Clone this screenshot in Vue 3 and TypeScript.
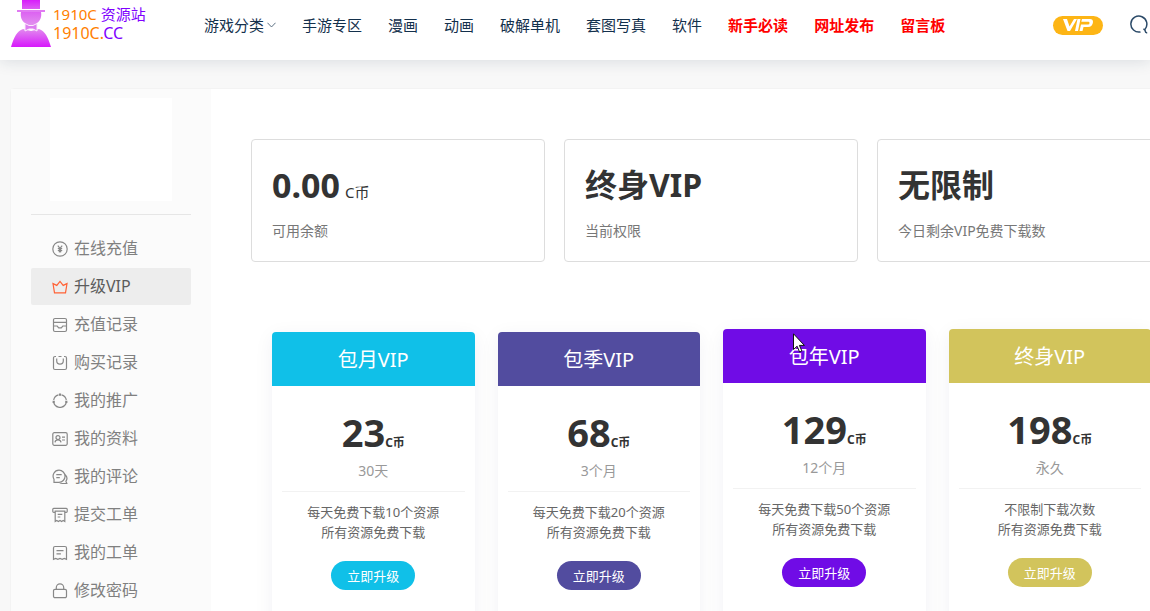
<script setup lang="ts">
interface NavItem { label: string; hot?: boolean; menu?: boolean }
interface SideItem { label: string; icon: string; active?: boolean }
interface Stat { value: string; unit?: string; label: string }
interface Plan { name: string; price: string; term: string; features: string[]; theme: string; raised?: boolean }

const nav: NavItem[] = [
  { label: '游戏分类', menu: true },
  { label: '手游专区' },
  { label: '漫画' },
  { label: '动画' },
  { label: '破解单机' },
  { label: '套图写真' },
  { label: '软件' },
  { label: '新手必读', hot: true },
  { label: '网址发布', hot: true },
  { label: '留言板', hot: true },
]

const side: SideItem[] = [
  { label: '在线充值', icon: 'M8 .8a7.2 7.2 0 1 0 0 14.4A7.2 7.2 0 0 0 8 .8M5.8 4.6 8 7.4l2.2-2.8M8 7.4v4M5.8 7.5h4.4M5.8 9.5h4.4M7.3 6.5v4.8M8.7 6.5v4.8' },
  { label: '升级VIP', icon: 'M1 4.6 4.8 6.400 8 2.400l3.200 4L15 4.600l-1.500 9.200h-11z', active: true },
  { label: '充值记录', icon: 'M3 1.5h10a1.5 1.5 0 0 1 1.5 1.5v10a1.5 1.5 0 0 1-1.5 1.5H3A1.5 1.5 0 0 1 1.5 13V3A1.5 1.5 0 0 1 3 1.5M1.5 5.4h13M1.5 9h3.7l1.5 1.8h2.6L10.8 9h3.7' },
  { label: '购买记录', icon: 'M4 1.5H3A1.5 1.5 0 0 0 1.500 3V13A1.5 1.5 0 0 0 3 14.5h10a1.5 1.5 0 0 0 1.5-1.5V3A1.500 1.500 0 0 0 13 1.500H12M6.500 1.500h3M4.700 3.400v2.400a3.300 3.300 0 0 0 6.600 0V3.400' },
  { label: '我的推广', icon: 'M9.6 1.8a6.4 6.4 0 0 1 4.7 5.2M14.2 9.8a6.4 6.4 0 0 1-4.5 4.4M9.700 14.200a6.400 6.400 0 0 1-3.400 0M6.3 14.2a6.4 6.4 0 0 1-4.5-4.4M1.7 7a6.4 6.4 0 0 1 4.7-5.2M7.500 1.200h1v1h-1zM13.800 8.300h1v1h-1zM1.200 8.300h1v1h-1z' },
  { label: '我的资料', icon: 'M2.3 1.7h11.4a1.5 1.5 0 0 1 1.5 1.5v9.6a1.5 1.5 0 0 1-1.5 1.5H2.3a1.5 1.5 0 0 1-1.5-1.5V3.2a1.5 1.5 0 0 1 1.5-1.5M6 4.6a2 2 0 1 0 0 4 2 2 0 0 0 0-4M3 11.4c.1-1.6 1-2.6 3-2.6s2.800 1 3 2.600M10 6.200h3M10 9h3' },
  { label: '我的评论', icon: 'M7 1.200a5.900 5.900 0 0 0-5 9v3.100h5a6 6 0 0 0 0-12.100M4.300 5.600h5.400M4.300 8.600h3.500M13.200 5.800a5 5 0 0 1 .7 6.500l.9 2.200h-4.300a5 5 0 0 1-3-.9' },
  { label: '提交工单', icon: 'M3 5.400H1.700A.9.9 0 0 1 .8 4.500V2.300a.9.9 0 0 1 .9-.9h12.600a.9.9 0 0 1 .9.9v2.200a.9.9 0 0 1-.9.9H13M3.200 4.200h9.600v10.300l-1.600-1-1.600 1-1.600-1-1.600 1-1.600-1-1.600 1zM5.700 7.300h4.600M5.700 10h2.600' },
  { label: '我的工单', icon: 'M3 1.500h10A1.500 1.500 0 0 1 14.500 3v11.400l-2.200-.9-2.100.9-2.200-.9-2.200.9-2.100-.9-2.200.9V3A1.500 1.500 0 0 1 3 1.500M4.500 5.600h7M4.500 8.800h4.400' },
  { label: '修改密码', icon: 'M3 6.300h10a1.500 1.500 0 0 1 1.500 1.500v5.400a1.500 1.500 0 0 1-1.500 1.500H3a1.500 1.500 0 0 1-1.500-1.500V7.800A1.500 1.500 0 0 1 3 6.300M4.300 6V4.500a3.700 3.700 0 0 1 7.400 0V6' },
]

const stats: Stat[] = [
  { value: '0.00', unit: 'C币', label: '可用余额' },
  { value: '终身VIP', label: '当前权限' },
  { value: '无限制', label: '今日剩余VIP免费下载数' },
]

const plans: Plan[] = [
  { name: '包月VIP', price: '23', term: '30天', features: ['每天免费下载10个资源', '所有资源免费下载'], theme: 'cyan' },
  { name: '包季VIP', price: '68', term: '3个月', features: ['每天免费下载20个资源', '所有资源免费下载'], theme: 'indigo' },
  { name: '包年VIP', price: '129', term: '12个月', features: ['每天免费下载50个资源', '所有资源免费下载'], theme: 'violet', raised: true },
  { name: '终身VIP', price: '198', term: '永久', features: ['不限制下载次数', '所有资源免费下载'], theme: 'gold', raised: true },
]
</script>

<template>
  <div class="page">
    <header class="topbar">
      <a class="brand" href="#">
        <svg class="mascot" viewBox="0 0 40 47" aria-hidden="true">
          <defs>
            <linearGradient id="hat" x1="0" y1="0" x2="0" y2="1">
              <stop offset="0" stop-color="#d81cfb" />
              <stop offset="1" stop-color="#dc5cf3" />
            </linearGradient>
            <linearGradient id="face" x1="0" y1="0" x2="0" y2="1">
              <stop offset="0" stop-color="#dc62f2" />
              <stop offset="1" stop-color="#e293ee" />
            </linearGradient>
            <linearGradient id="coat" x1="0" y1="0" x2="0" y2="1">
              <stop offset="0" stop-color="#e18bee" />
              <stop offset="1" stop-color="#d718fc" />
            </linearGradient>
          </defs>
          <path d="M11 0h18v9H11z" fill="url(#hat)" />
          <path d="M6 10h28v2H6z" fill="#e07af2" />
          <path d="M10 12h20c1 5-1 9-4 11l-1 3H15l-1-3c-3-2-5-6-4-11" fill="url(#face)" />
          <path d="M12 29c-6 2-9 8-12 18h40c-3-10-6-16-12-18l-8 2z" fill="url(#coat)" />
          <path d="M14 23.500l4 2h4l4-2v7.500l-4-2h-4l-4 2z" fill="#dd7cf0" stroke="#fbeafd" stroke-width="1" />
        </svg>
        <span class="brand-text">
          <span class="brand-name">1910C <b>资源站</b></span>
          <span>1910C.<b>CC</b></span>
        </span>
      </a>
      <nav class="nav">
        <a v-for="item in nav" :key="item.label" href="#" :class="{ hot: item.hot }">
          {{ item.label }}
          <svg v-if="item.menu" class="chevron" viewBox="0 0 10 6" aria-hidden="true"><path d="M.5.500 5 5.200 9.500.500" /></svg>
        </a>
      </nav>
      <a class="vip" href="#" aria-label="VIP">
        <svg viewBox="0 0 30 12" aria-hidden="true">
          <path d="M0 0h4l2.500 7.500L11 0h3L7 12H4.500zM14.500 0h3L15 12h-3zM19 0h8q3 0 3 3-.5 5-5 5h-4.500l-1 4h-3l1.500-6.500H25q1.500 0 1.500-1.500T25 2.800h-6.700z" />
        </svg>
      </a>
      <button class="search" type="button" aria-label="搜索">
        <svg viewBox="0 0 20 20" aria-hidden="true"><path d="M11.500 16.900A8 8 0 1 1 16 14.200M14.300 14.300q1.900 0 1.900 1.700t2 1.900" /></svg>
      </button>
    </header>

    <div class="panel">
      <aside class="sidebar">
        <div class="avatar"></div>
        <nav class="menu">
          <a v-for="item in side" :key="item.label" href="#" :class="{ active: item.active }">
            <svg viewBox="0 0 16 16" aria-hidden="true"><path :d="item.icon" /></svg>
            <span>{{ item.label }}</span>
          </a>
        </nav>
      </aside>

      <main class="content">
        <section class="stats">
          <div v-for="s in stats" :key="s.label" class="stat">
            <div class="value" :class="{ number: s.unit }">
              <span>{{ s.value }}</span>
              <small v-if="s.unit">{{ s.unit }}</small>
            </div>
            <div class="label">{{ s.label }}</div>
          </div>
        </section>

        <section class="plans">
          <article v-for="p in plans" :key="p.name" class="plan" :class="[p.theme, { raised: p.raised }]">
            <h2>{{ p.name }}</h2>
            <div class="price">{{ p.price }}<small>C币</small></div>
            <div class="term">{{ p.term }}</div>
            <ul>
              <li v-for="f in p.features" :key="f">{{ f }}</li>
            </ul>
            <button type="button">立即升级</button>
          </article>
        </section>
      </main>
    </div>

    <svg class="cursor" viewBox="0 0 12 20" aria-hidden="true">
      <path d="M.5.800v15.700l3.600-3.300 2.500 5.800 2.300-1-2.500-5.600h5z" />
    </svg>
  </div>
</template>

<style>
body {
  margin: 0;
}
</style>

<style scoped>
* {
  box-sizing: border-box;
}
.page {
  position: relative;
  height: 100vh;
  overflow: hidden;
  background: #f8f8f8;
  color: #333;
  font-family: "Noto Sans", "Noto Sans CJK SC", sans-serif;
}
a {
  color: inherit;
  text-decoration: none;
}
.topbar {
  display: flex;
  align-items: center;
  height: 60px;
  padding: 0 0 10px 11px;
  background: #fff;
  box-shadow: 0 2px 14px rgba(20, 50, 80, 0.13);
}
.brand {
  display: flex;
  align-items: flex-start;
  gap: 2px;
  width: 193px;
  height: 50px;
}
.mascot {
  width: 40px;
  height: 47px;
}
.brand-text {
  display: flex;
  flex-direction: column;
  padding-top: 5px;
  font-size: 16px;
  line-height: 19px;
  color: #ff8000;
  white-space: nowrap;
}
.brand-name {
  font-size: 15px;
}
.brand-text b {
  font-weight: 400;
  color: #8000ff;
}
.nav {
  display: flex;
  gap: 26px;
  font-size: 15px;
  line-height: 22px;
  color: #13304c;
  white-space: nowrap;
}
.nav a {
  display: flex;
  align-items: center;
  gap: 3px;
}
.nav .hot {
  font-weight: 700;
  color: #f00;
}
.chevron {
  width: 9px;
  height: 6px;
  fill: none;
  stroke: #4a6075;
}
.vip {
  display: flex;
  align-items: center;
  justify-content: center;
  width: 50px;
  height: 19px;
  margin-left: auto;
  border-radius: 10px;
  background: #fdb515;
}
.vip svg {
  width: 30px;
  height: 12px;
  fill: #fff;
}
.search {
  flex: none;
  width: 21px;
  height: 20px;
  margin-left: 26px;
  padding: 0;
  border: 0;
  background: none;
}
.search svg {
  display: block;
  width: 20px;
  height: 20px;
  fill: none;
  stroke: #2b4a68;
  stroke-width: 1.5;
}
.panel {
  display: flex;
  min-width: 1202px;
  margin: 28px 0 0 10px;
  border: 1px solid #f3f3f3;
  border-radius: 4px;
  background: #fff;
}
.sidebar {
  flex: none;
  width: 200px;
  padding: 9px 20px 20px;
  background: #fbfbfb;
}
.avatar {
  width: 122px;
  height: 103px;
  margin: 0 auto 13px;
  background: #fff;
}
.menu {
  display: flex;
  flex-direction: column;
  gap: 1px;
  padding-top: 15px;
  border-top: 1px solid #e6e6e6;
}
.menu a {
  display: flex;
  align-items: center;
  gap: 6px;
  height: 37px;
  padding-left: 21px;
  border-radius: 2px;
  font-size: 16px;
  line-height: 22px;
  color: #808080;
}
.menu span {
  padding-bottom: 2px;
}
.menu svg {
  width: 16px;
  height: 16px;
  fill: none;
  stroke: #888;
  stroke-width: 1.2;
}
.menu .active {
  background: #ededed;
  color: #5c5c5c;
}
.menu .active svg {
  stroke: #ff6236;
}
.content {
  flex: 1;
  padding: 50px 40px 40px;
}
.stats {
  display: grid;
  grid-template-columns: repeat(3, 1fr);
  gap: 19px;
}
.stat {
  padding: 21px 20px 19px;
  border: 1px solid #ddd;
  border-radius: 4px;
}
.value {
  display: flex;
  align-items: baseline;
  gap: 5px;
  height: 48px;
  font-size: 32px;
  font-weight: 700;
  line-height: 48px;
}
.value.number {
  font-size: 34px;
}
.value small {
  font-size: 15px;
  font-weight: 400;
  line-height: 20px;
}
.label {
  margin-top: 11px;
  font-size: 14px;
  line-height: 22px;
  color: #777;
}
.plans {
  display: grid;
  grid-template-columns: repeat(4, 1fr);
  gap: 23px;
  padding: 70px 20px 0 21px;
}
.plan {
  padding-bottom: 40px;
  border-radius: 4px;
  background: #fff;
  box-shadow: 0 4px 20px rgba(40, 40, 90, 0.06);
  text-align: center;
}
.plan.raised {
  transform: translateY(-3px);
}
.plan h2 {
  margin: 0;
  padding-top: 2px;
  border-radius: 4px 4px 0 0;
  background: var(--tone);
  color: #fff;
  font-size: 20px;
  font-weight: 400;
  line-height: 52px;
}
.price {
  height: 48px;
  margin-top: 22px;
  font-size: 38px;
  font-weight: 700;
  line-height: 48px;
}
.price small {
  font-size: 12px;
}
.term {
  margin: 5px 10px 0;
  padding-bottom: 10px;
  border-bottom: 1px solid #f2f2f2;
  font-size: 14px;
  line-height: 20px;
  color: #999;
}
.plan ul {
  margin: 10px 0 19px;
  padding: 0;
  list-style: none;
  font-size: 13px;
  line-height: 20px;
  color: #666;
}
.plan button {
  height: 29px;
  padding: 0 16px;
  border: 0;
  border-radius: 15px;
  background: var(--tone);
  color: #fff;
  font-family: inherit;
  font-size: 13px;
}
.cyan {
  --tone: #10c0e8;
}
.indigo {
  --tone: #524c9f;
}
.violet {
  --tone: #700ce6;
}
.gold {
  --tone: #d2c45c;
}
.cursor {
  position: absolute;
  top: 333px;
  left: 793px;
  width: 12px;
  height: 20px;
  fill: #fff;
  stroke: #111;
}
</style>
